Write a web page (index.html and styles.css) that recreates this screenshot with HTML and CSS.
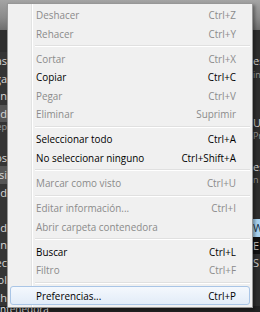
FILE: index.html
```html
<!DOCTYPE html>
<html lang="es">
<head>
<meta charset="utf-8">
<link rel="stylesheet" href="styles.css">
</head>
<body>
<div class="app">
  <div class="topbar"></div>
  <div class="content">
    <div class="col left">
      <div class="row">Rutas</div>
      <div class="row">Ruta larga</div>
      <div class="row">Origen</div>
      <div class="row sel">Wild</div>
      <div class="row small">Grep</div>
      <div class="row"></div>
      <div class="row">Estados</div>
      <div class="row sel">Visi</div>
      <div class="row">Rapid</div>
      <div class="row"></div>
      <div class="row">Buscad</div>
      <div class="row">Origen</div>
      <div class="row">Rec</div>
      <div class="row">Col</div>
      <div class="row">Coch</div>
    </div>
    <div class="mid"></div>
    <div class="col right">
      <div class="row">es</div>
      <div class="row small">in</div>
      <div class="row gap"></div>
      <div class="row gap"></div>
      <div class="row">Un</div>
      <div class="row small">Pr</div>
      <div class="row gap"></div>
      <div class="row">es</div>
      <div class="row small">n</div>
      <div class="row gap"></div>
      <div class="row gap"></div>
      <div class="row blue">W</div>
      <div class="row box">E</div>
      <div class="row">S</div>
    </div>
  </div>
  <div class="bottom"><span class="btxt">ntenedora</span></div>
</div>

<div class="menu">
  <div class="item dis"><span>Deshacer</span><span class="key">Ctrl+Z</span></div>
  <div class="item dis"><span>Rehacer</span><span class="key">Ctrl+Y</span></div>
  <div class="sep"></div>
  <div class="item dis"><span>Cortar</span><span class="key">Ctrl+X</span></div>
  <div class="item"><span>Copiar</span><span class="key">Ctrl+C</span></div>
  <div class="item dis"><span>Pegar</span><span class="key">Ctrl+V</span></div>
  <div class="item dis"><span>Eliminar</span><span class="key">Suprimir</span></div>
  <div class="sep"></div>
  <div class="item"><span>Seleccionar todo</span><span class="key">Ctrl+A</span></div>
  <div class="item"><span>No seleccionar ninguno</span><span class="key">Ctrl+Shift+A</span></div>
  <div class="sep"></div>
  <div class="item dis"><span>Marcar como visto</span><span class="key">Ctrl+U</span></div>
  <div class="sep"></div>
  <div class="item dis"><span>Editar información...</span><span class="key">Ctrl+I</span></div>
  <div class="item dis"><span>Abrir carpeta contenedora</span><span class="key"></span></div>
  <div class="sep"></div>
  <div class="item"><span>Buscar</span><span class="key">Ctrl+L</span></div>
  <div class="item dis"><span>Filtro</span><span class="key">Ctrl+F</span></div>
  <div class="sep"></div>
  <div class="item hover"><span>Preferencias...</span><span class="key">Ctrl+P</span></div>
</div>
</body>
</html>
```

FILE: styles.css
```css
* { box-sizing: border-box; }
html, body { margin: 0; padding: 0; }
body {
  width: 260px;
  height: 312px;
  overflow: hidden;
  background: #2c2c2c;
  font-family: "Open Sans", "Noto Sans", sans-serif;
  position: relative;
}
.app {
  display: flex;
  flex-direction: column;
  height: 312px;
}
.topbar {
  height: 30px;
  background: linear-gradient(#a4a4a4, #8a8a8a 60%, #6e6e6e);
}
.content {
  flex: 1;
  display: flex;
  background: #2e2e2e;
  padding-top: 22px;
  min-height: 0;
}
.col {
  display: flex;
  flex-direction: column;
  overflow: hidden;
  color: #d8d8d8;
  font-size: 11px;
  white-space: nowrap;
}
.left { width: 7px; align-items: flex-end; background: #353535; }
.mid { flex: 1; }
.right { width: 7px; align-items: flex-start; }
.row { height: 17.5px; line-height: 17.5px; flex: none; }
.row.small { font-size: 9px; color: #9a9a9a; height: 9px; line-height: 9px; }
.row.sel { background: #555; }
.right .row.blue { background: #a8d2f0; color: #203040; width: 100%; }
.right .row.box { background: #111; color: #ccc; width: 100%; }
.bottom {
  height: 6px;
  background: #222;
  color: #ddd;
  font-size: 10px;
  line-height: 6px;
  overflow: hidden;
  display: flex;
}
.btxt { width: 44px; }

.menu {
  position: absolute;
  left: 7px;
  top: 3px;
  width: 246px;
  height: 305px;
  border: 1px solid #979797;
  padding: 2px;
  background:
    linear-gradient(to right, transparent 23px, #e2e3e3 23px, #e2e3e3 24px, #ffffff 24px, #ffffff 25px, transparent 25px),
    #f0f0f0;
  box-shadow: 2px 2px 3px rgba(0,0,0,0.35);
  font-family: "Open Sans", "Noto Sans", sans-serif;
  font-size: 9.9px;
  color: #000;
}
.item {
  height: 18.4px;
  display: flex;
  align-items: center;
  justify-content: space-between;
  padding: 0 13px 0 25px;
  border: 1px solid transparent;
  border-radius: 3px;
  white-space: nowrap;
}
.item.dis { color: #8b8b8b; }
.item.hover {
  border-color: #a9c5e6;
  background: linear-gradient(#f4f8fd, #e2ecf8);
}
.sep {
  height: 6.9px;
  margin-left: 25px;
  display: flex;
  flex-direction: column;
  justify-content: center;
}
.sep::before {
  content: "";
  display: block;
  height: 1px;
  background: #e0e0e0;
}
.sep::after {
  content: "";
  display: block;
  height: 1px;
  background: #ffffff;
}
```
